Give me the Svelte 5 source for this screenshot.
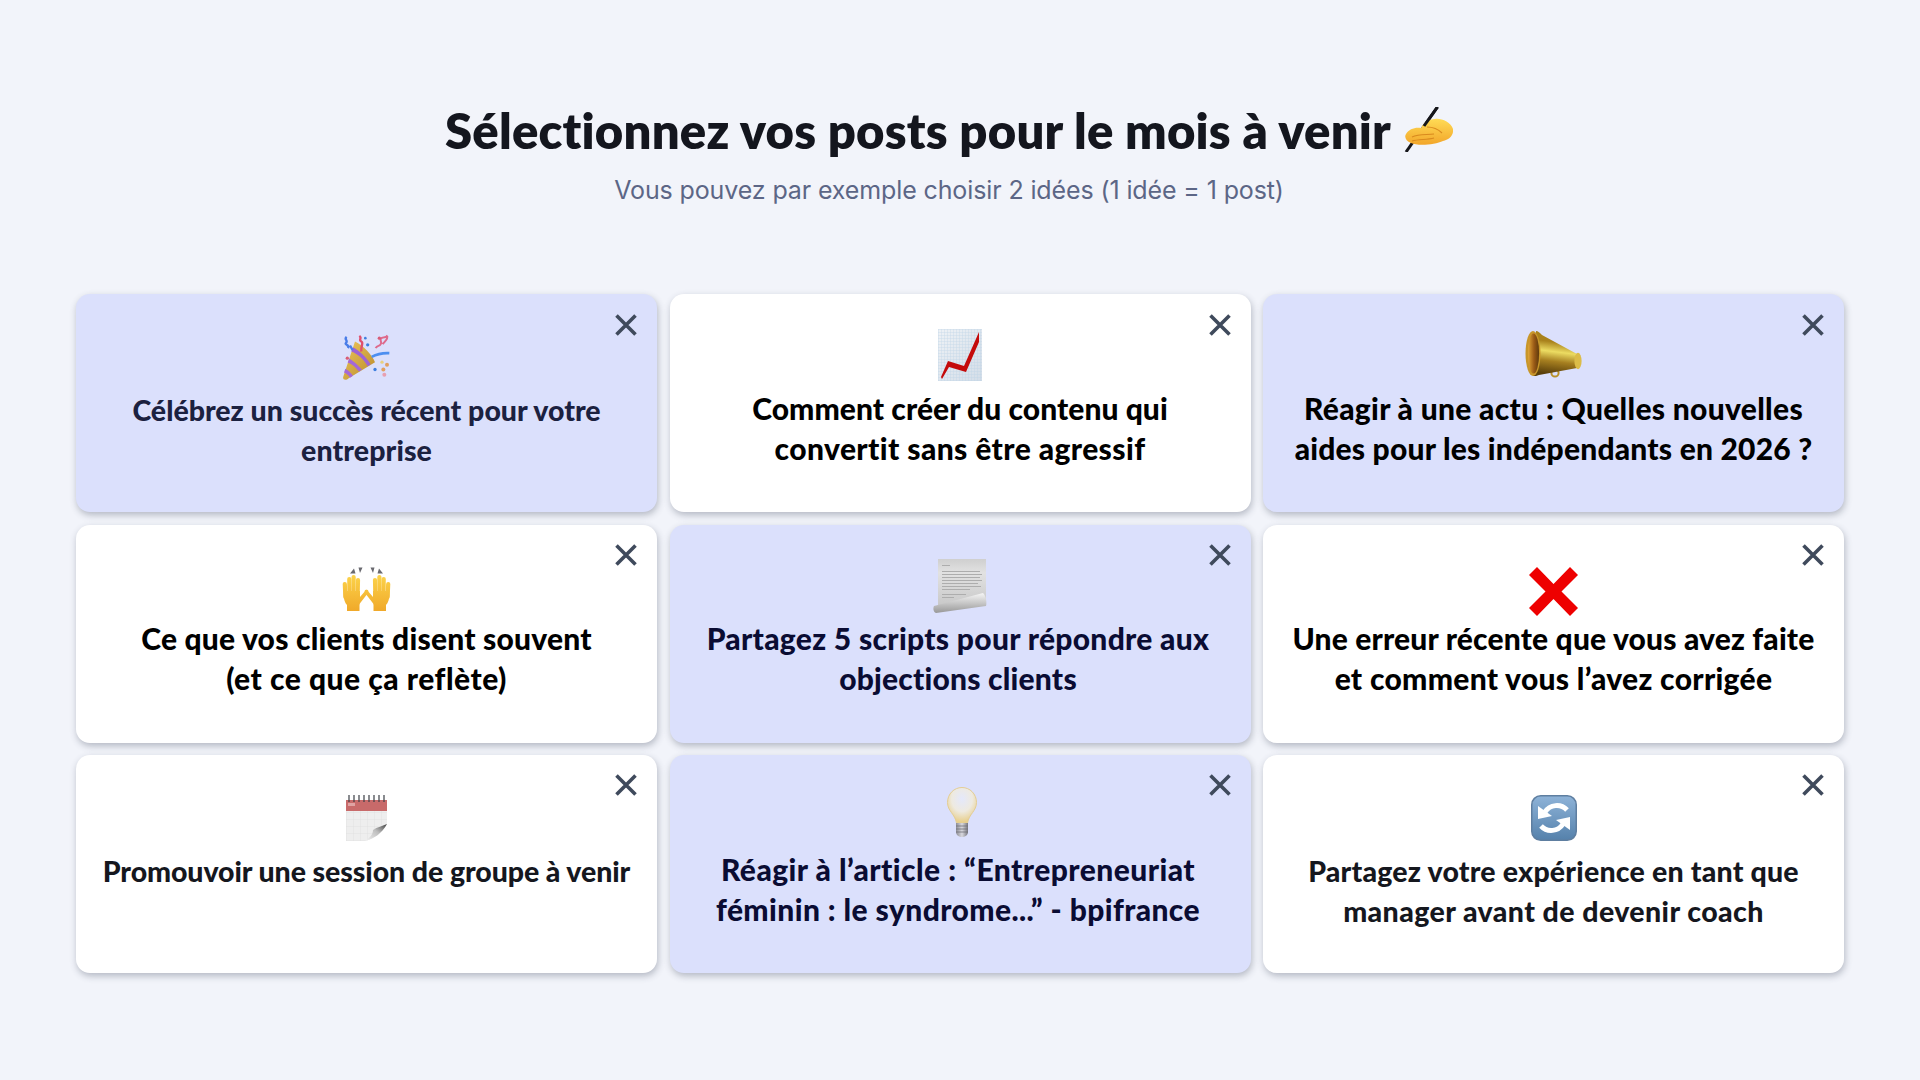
<script>
  const cards = [
    { id: 'c1', icon: 'party', on: true, lines: [['Célébrez un succès récent pour votre', 0], ['entreprise', 0.1]] },
    { id: 'c2', icon: 'chart', on: false, lines: [['Comment créer du contenu qui', 0.05], ['convertit sans être agressif', 0.4]] },
    { id: 'c3', icon: 'mega', on: true, lines: [['Réagir à une actu : Quelles nouvelles', 0.3], ['aides pour les indépendants en 2026 ?', 0.2]] },
    { id: 'c4', icon: 'hands', on: false, lines: [['Ce que vos clients disent souvent', 0.2], ['(et ce que ça reflète)', 0.5]] },
    { id: 'c5', icon: 'scroll', on: true, lines: [['Partagez 5 scripts pour répondre aux', 0.3], ['objections clients', 0.2]] },
    { id: 'c6', icon: 'cross', on: false, lines: [['Une erreur récente que vous avez faite', 0.17], ['et comment vous l’avez corrigée', 0.3]] },
    { id: 'c7', icon: 'cal', on: false, lines: [['Promouvoir une session de groupe à venir', -0.08]] },
    { id: 'c8', icon: 'bulb', on: true, lines: [['Réagir à l’article : “Entrepreneuriat', 0.45], ['féminin : le syndrome...” - bpifrance', 0.4]] },
    { id: 'c9', icon: 'sync', on: false, lines: [['Partagez votre expérience en tant que', 0.2], ['manager avant de devenir coach', 0.42]] },
  ];
</script>

<main class="page">
  <header class="head">
    <h1 class="title">
      <span>Sélectionnez vos posts pour le mois à venir</span>
      <svg class="write" width="50" height="45" viewBox="0 0 50 45" aria-hidden="true">
        <defs>
          <linearGradient id="wr" x1="0" y1="0" x2="0" y2="1"><stop offset="0" stop-color="#ffdb55"/><stop offset="1" stop-color="#f2a62a"/></linearGradient>
        </defs>
        <path d="M34.5 0 L3 45" stroke="#16161a" stroke-width="3"/>
        <path d="M3 27 C6 22 12 20 18 21 C20 16 26 12 32 12 C38 11 48 15 50 22 C51 28 46 33 40 34 C32 38 14 39 8 36 C3 34 1 30 3 27Z" fill="url(#wr)"/>
        <path d="M34.5 0 L21 19" stroke="#16161a" stroke-width="3"/>
        <path d="M9 30 C16 27 24 28 31 27 M9 34 C16 32 24 33 31 31 M24 20 C30 20 35 22 39 26" stroke="#d98a1e" stroke-width="1.1" fill="none"/>
      </svg>
    </h1>
    <p class="sub">Vous pouvez par exemple choisir 2 idées (1 idée = 1 post)</p>
  </header>

  <section class="grid">
    {#each cards as c (c.id)}
      <article class="card {c.id}" class:on={c.on}>
        <div class="slot">
          {#if c.icon === 'party'}
            <svg class="ic" width="50" height="47" viewBox="66 25 150 140" aria-hidden="true">
              <defs>
                <linearGradient id="pg" x1="0" y1="0" x2="1" y2="1"><stop offset="0" stop-color="#ecc65a"/><stop offset="1" stop-color="#b98a2c"/></linearGradient>
              </defs>
              <path d="M70 155 C66 165 78 168 86 160 L165 112 C158 92 130 62 105 50Z" fill="url(#pg)"/>
              <path d="M100 68 C118 78 138 96 152 118 L143 124 C132 104 114 88 94 80Z" fill="#9d63d6"/>
              <path d="M88 101 C100 108 114 122 126 134 L117 140 C108 128 96 118 83 113Z" fill="#a468d8"/>
              <path d="M76 132 C84 136 92 144 99 153 L90 159 C85 150 79 146 72 143Z" fill="#a468d8"/>
              <path d="M80 36 C70 44 86 46 78 54 C72 60 90 60 84 70 M90 62 L98 76" stroke="#4a7de8" stroke-width="7" fill="none"/>
              <path d="M118 33 C128 40 114 44 124 50 C132 54 122 62 124 80" stroke="#e0506e" stroke-width="7" fill="none"/>
              <path d="M167 70 C172 60 178 66 182 58 C188 50 176 46 184 40 C190 36 198 38 204 34 M198 32 C208 40 194 50 188 58" stroke="#de6a8c" stroke-width="6" fill="none"/>
              <path d="M155 96 C170 88 190 84 208 85" stroke="#4d8ff0" stroke-width="8" fill="none"/>
              <circle cx="82" cy="100" r="5" fill="#d85c78"/><circle cx="143" cy="60" r="5" fill="#3f7fe0"/><circle cx="136" cy="40" r="4" fill="#3f7fe0"/><circle cx="178" cy="40" r="5" fill="#d85c78"/>
              <circle cx="186" cy="112" r="5" fill="#e8d080"/><circle cx="165" cy="134" r="5" fill="#3f7fe0"/><circle cx="190" cy="134" r="6" fill="#e0a060"/><circle cx="201" cy="120" r="6" fill="#e0a060"/><circle cx="193" cy="150" r="6" fill="#e8a0b0"/>
            </svg>
          {:else if c.icon === 'chart'}
            <svg class="ic" width="44" height="52" viewBox="0 0 44 52" aria-hidden="true">
              <defs>
                <pattern id="gr" width="3" height="3" patternUnits="userSpaceOnUse"><path d="M3 0H0V3" fill="none" stroke="#b9cfe3" stroke-width=".6"/></pattern>
                <linearGradient id="cp" x1="0" y1="0" x2="1" y2="1"><stop offset="0" stop-color="#eef2f6"/><stop offset="1" stop-color="#d3dde8"/></linearGradient>
              </defs>
              <rect width="44" height="52" fill="url(#cp)"/>
              <rect width="44" height="52" fill="url(#gr)"/>
              <path d="M3 48 L10 32 L26 37 L41 3 L41 13 L28 43 L11 38 L4 50Z" fill="#c40a0a"/>
            </svg>
          {:else if c.icon === 'mega'}
            <svg class="ic" width="57" height="48" viewBox="0 0 57 48" aria-hidden="true">
              <defs>
                <linearGradient id="mg" gradientUnits="userSpaceOnUse" x1="30" y1="12" x2="26" y2="44"><stop offset="0" stop-color="#a9821c"/><stop offset=".3" stop-color="#ecdc62"/><stop offset=".6" stop-color="#a67f20"/><stop offset="1" stop-color="#5a3f0a"/></linearGradient>
                <linearGradient id="mm" x1="0" y1="0" x2="1" y2="0"><stop offset="0" stop-color="#e2a838"/><stop offset=".55" stop-color="#9a5a16"/><stop offset="1" stop-color="#5e3a0c"/></linearGradient>
              </defs>
              <circle cx="30" cy="43" r="3.6" fill="none" stroke="#b89028" stroke-width="2"/>
              <path d="M11 1 C13 1 15 3 17 5 L52 24 L52 38 L14 45 C12 46 10 46 8 46Z" fill="url(#mg)"/>
              <ellipse cx="8" cy="23.5" rx="7.5" ry="22.5" fill="#c8962a"/>
              <ellipse cx="8.5" cy="23.5" rx="5.6" ry="20" fill="url(#mm)"/>
              <ellipse cx="53" cy="31" rx="3.6" ry="8.2" fill="#dcbc48"/>
            </svg>
          {:else if c.icon === 'hands'}
            <svg class="ic" width="49" height="44" viewBox="0 0 49 44" aria-hidden="true">
              <defs>
                <linearGradient id="hd" gradientUnits="userSpaceOnUse" x1="0" y1="8" x2="0" y2="44"><stop offset="0" stop-color="#fcd34a"/><stop offset="1" stop-color="#f0a92a"/></linearGradient>
                <g id="hand">
                  <g stroke="url(#hd)" stroke-width="4.2" stroke-linecap="round" fill="none">
                    <path d="M3.4 30 L2.8 17"/><path d="M7.5 28 L7.3 12"/><path d="M11.5 28 L11.6 10"/><path d="M15.6 28 L16 13"/>
                  </g>
                  <path d="M1.6 24 H18 V30 L24 23 C26 22 27 24 26 26 L19 35 C18 36 17.5 37 17.5 38 V44 H5 V38 C3 36 1.6 32 1.6 28Z" fill="url(#hd)"/>
                </g>
              </defs>
              <use href="#hand"/>
              <use href="#hand" transform="translate(49 0) scale(-1 1)"/>
              <path d="M8 6.5 L12 1.5 L13.5 6.5Z M18 6 L16.5 .5 L20.5 .5Z M28.5 .5 L32.5 .5 L31 6Z M35.5 6.5 L37 1.5 L41 6.5Z" fill="#6a6a70"/>
            </svg>
          {:else if c.icon === 'scroll'}
            <svg class="ic" width="54" height="55" viewBox="0 0 54 55" aria-hidden="true">
              <defs>
                <linearGradient id="sp" x1="0" y1="0" x2="0" y2="1"><stop offset="0" stop-color="#cfcfcf"/><stop offset=".3" stop-color="#e2e2e2"/><stop offset="1" stop-color="#c9c9c9"/></linearGradient>
                <linearGradient id="sr" x1="0" y1="0" x2="0" y2="1"><stop offset="0" stop-color="#f6f6f6"/><stop offset="1" stop-color="#989898"/></linearGradient>
              </defs>
              <rect x="5" y="1" width="48" height="46" fill="url(#sp)"/>
              <g fill="#adadad">
                <rect x="9" y="7" width="8" height="1"/><rect x="9" y="13" width="38" height="1"/><rect x="9" y="16" width="40" height="1"/><rect x="9" y="19" width="38" height="1"/><rect x="9" y="22" width="40" height="1"/><rect x="9" y="25" width="36" height="1"/><rect x="9" y="28" width="39" height="1"/><rect x="9" y="31" width="28" height="1"/><rect x="9" y="36" width="24" height="1"/><rect x="9" y="39" width="12" height="1"/>
              </g>
              <path d="M1 48 L50 35 C53 38 54 44 53 48 L3 55 C0 54 0 50 1 48Z" fill="url(#sr)"/>
            </svg>
          {:else if c.icon === 'cross'}
            <svg class="ic" width="49" height="49" viewBox="0 0 49 49" aria-hidden="true">
              <path d="M8 0 L24.5 17 L41 0 L49 8 L32.5 24.5 L49 41 L41 49 L24.5 32 L8 49 L0 41 L16.5 24.5 L0 8Z" fill="#ee0000"/>
            </svg>
          {:else if c.icon === 'cal'}
            <svg class="ic" width="41" height="46" viewBox="0 0 41 46" aria-hidden="true">
              <defs>
                <pattern id="cg" width="7" height="7" patternUnits="userSpaceOnUse" y="3"><path d="M7 0H0V7" fill="none" stroke="#dcdcdc" stroke-width=".7"/></pattern>
                <linearGradient id="cc" x1="0" y1="1" x2="1" y2="0"><stop offset="0" stop-color="#f4f4f4"/><stop offset=".55" stop-color="#bdbdbd"/><stop offset="1" stop-color="#444"/></linearGradient>
              </defs>
              <rect y="5" width="41" height="11" fill="#c86a6a"/>
              <rect y="16" width="41" height="30" fill="#eeeeee"/>
              <rect y="16" width="41" height="30" fill="url(#cg)"/>
              <rect x="2" y="8" width="7" height="3" fill="#dfa3a3"/>
              <path d="M41 29 C36 38 28 44 19 46 L41 46Z" fill="#fff"/>
              <path d="M41 29 C37 31 31 32 27 35 C27 39 24 43 19 46 C28 44 36 38 41 29Z" fill="url(#cc)"/>
              <g stroke="#3c4046" stroke-width="1.2">
                <path d="M3 0V7M8 0V7M13 0V7M18 0V7M23 0V7M28 0V7M33 0V7M38 0V7"/>
              </g>
            </svg>
          {:else if c.icon === 'bulb'}
            <svg class="ic" width="30" height="50" viewBox="0 0 30 50" aria-hidden="true">
              <defs>
                <radialGradient id="bg" cx=".5" cy=".32" r=".65"><stop offset="0" stop-color="#e4e8fb"/><stop offset=".55" stop-color="#eeeae0"/><stop offset="1" stop-color="#e8cf8c"/></radialGradient>
                <linearGradient id="bb" x1="0" y1="0" x2="1" y2="0"><stop offset="0" stop-color="#8d8d94"/><stop offset=".5" stop-color="#d8d8de"/><stop offset="1" stop-color="#77777e"/></linearGradient>
              </defs>
              <path d="M15 .5 C23 .5 29.5 7 29.5 15.5 C29.5 24 22 27 20.5 36 L9.5 36 C8 27 .5 24 .5 15.5 C.5 7 7 .5 15 .5Z" fill="url(#bg)" stroke="#e3cd94" stroke-width="1"/>
              <path d="M9 36 H21 V45 C21 48 18 50 15 50 C12 50 9 48 9 45Z" fill="url(#bb)"/>
              <path d="M9 39 H21 M9 42 H21 M9 45 H21" stroke="#6e6e76" stroke-width=".8"/>
            </svg>
          {:else}
            <svg class="ic" width="46" height="46" viewBox="0 0 46 46" aria-hidden="true">
              <defs>
                <linearGradient id="sy" x1="0" y1="0" x2="0" y2="1"><stop offset="0" stop-color="#8eb3d8"/><stop offset="1" stop-color="#5581ab"/></linearGradient>
              </defs>
              <rect x=".75" y=".75" width="44.5" height="44.5" rx="9" fill="url(#sy)" stroke="#5e7ea0" stroke-width="1.5"/>
              <path d="M36 15 A14 14 0 0 0 14 17" fill="none" stroke="#fff" stroke-width="5"/>
              <path d="M7 11 V24 L21 21Z" fill="#fff"/>
              <path d="M10 31 A14 14 0 0 0 32 29" fill="none" stroke="#fff" stroke-width="5"/>
              <path d="M39 35 V22 L25 25Z" fill="#fff"/>
            </svg>
          {/if}
        </div>
        <div class="text">
          {#each c.lines as [line, ls]}
            <span class="line" style:letter-spacing="{ls}px">{line}</span>
          {/each}
        </div>
        <svg class="close" width="22" height="22" viewBox="0 0 22 22" aria-hidden="true">
          <path d="M1.5 1.5 L20.5 20.5 M20.5 1.5 L1.5 20.5" stroke-width="3.6" fill="none"/>
        </svg>
      </article>
    {/each}
  </section>
</main>

<style>
  :global(body) { background: #f2f4fa; }
  .page {
    box-sizing: border-box;
    height: 1080px;
    overflow: hidden;
    padding: 100px 76px 0;
    background: #f2f4fa;
    font-family: Lato, "Liberation Sans", sans-serif;
    font-variant-ligatures: none;
  }
  .head { padding-right: 22px; height: 194px; }
  .title {
    display: flex;
    justify-content: center;
    align-items: flex-start;
    gap: 12px;
    margin: 0;
    height: 60px;
    font-size: 49px;
    line-height: 60px;
    font-weight: 800;
    letter-spacing: 0.2px;
    color: #14161e;
    white-space: nowrap;
  }
  .write { margin-top: 7px; }
  .sub {
    margin: 14px 0 0;
    text-align: center;
    font-family: Inter, sans-serif;
    font-size: 25px;
    line-height: 32px;
    letter-spacing: -0.12px;
    color: #5c6686;
  }
  .grid {
    display: grid;
    grid-template-columns: repeat(3, 581px);
    grid-auto-rows: 218px;
    gap: 12.5px;
  }
  .card {
    position: relative;
    background: #fff;
    border-radius: 14px;
    box-shadow: 1px 3px 7px rgba(50, 58, 80, 0.32);
    color: #000;
  }
  .card.on { background: #dbe0fc; }
  .slot { display: flex; justify-content: center; align-items: flex-start; height: 94px; }
  .text {
    font-size: 30px;
    line-height: 40px;
    font-weight: 900;
    text-align: center;
    white-space: nowrap;
  }
  .line { display: block; }
  .close { position: absolute; top: 20px; right: 20px; stroke: #3f4a5c; }
  .card:nth-child(n + 4) .close { top: 19px; }

  .c1 .slot { height: 96px; }
  .c1 .text { font-size: 28.5px; color: #1b2140; }
  .c4 .slot, .c5 .slot, .c6 .slot { height: 93px; }
  .c5 .text, .c8 .text { color: #0a0c33; padding-right: 4px; }
  .c7 .slot, .c9 .slot { height: 96px; }
  .c7 .text, .c9 .text { font-size: 28.5px; color: #15171e; }

  .c1 .ic { margin-top: 39px; }
  .c2 .ic { margin-top: 35px; }
  .c3 .ic { margin-top: 36px; }
  .c4 .ic { margin-top: 42px; }
  .c5 .ic { margin-top: 33px; }
  .c6 .ic { margin-top: 42px; }
  .c7 .ic { margin-top: 40px; }
  .c8 .ic { margin-top: 32px; margin-left: 4px; }
  .c9 .ic { margin-top: 40px; }
</style>
